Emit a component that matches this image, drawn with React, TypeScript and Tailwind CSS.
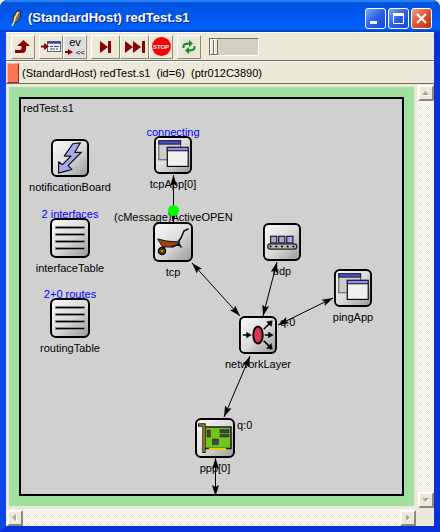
import type { ReactNode } from "react";

const bevel = "border border-t-white border-l-white border-r-[#8c897b] border-b-[#8c897b]";

function ToolButton({ label, wide, children }: { label: string; wide?: boolean; children: ReactNode }) {
  return (
    <button
      type="button"
      aria-label={label}
      className={`flex h-6 items-center justify-center bg-[#ece9d8] ${bevel} ${wide ? "w-[29px]" : "w-6"}`}
    >
      {children}
    </button>
  );
}

function Tile({ size, children }: { size: number; children: ReactNode }) {
  return (
    <svg width={size} height={size} viewBox="0 0 40 40" className="block" aria-hidden="true">
      <rect x="1" y="1" width="38" height="38" rx="5" fill="url(#tile)" stroke="#000" strokeWidth="2" />
      {children}
    </svg>
  );
}

function Lines() {
  return (
    <g>
      {[9, 16, 23, 30].map((y) => (
        <g key={y}>
          <path d={`M5 ${y + 0.5}H35`} stroke="#8a8a8a" strokeWidth="3" />
          <path d={`M6 ${y + 0.5}H34`} stroke="#000" strokeWidth="1" />
        </g>
      ))}
    </g>
  );
}

function Windows() {
  return (
    <g strokeWidth="1.2">
      <rect x="5" y="5" width="23" height="20" fill="#cccccc" stroke="#666" />
      <rect x="5" y="5" width="23" height="3.5" fill="#5050c8" stroke="#224" />
      <rect x="14" y="12" width="22" height="20" fill="#f0f0f0" stroke="#000" />
      <rect x="14" y="12" width="22" height="3.5" fill="#9090e4" stroke="#224" />
    </g>
  );
}

function Bolt() {
  return (
    <path
      d="M23 5L31 4L25 14L32 14L18 28L22 32L8 36L8 24L12 27L21 18L14 18Z"
      fill="#a8a8ec"
      stroke="#111"
      strokeWidth="1.3"
      strokeLinejoin="round"
    />
  );
}

function Barrow() {
  return (
    <g stroke="#111" strokeLinecap="round" strokeLinejoin="round">
      <path d="M25 20L28 16L31 9L35 7" fill="none" strokeWidth="1.6" />
      <path d="M5 17L13 19L27 20L25 23L18 25L10 25Z" fill="#a0400c" strokeWidth="1" />
      <path d="M19 25L26 22L28 25M11 25L9 29" fill="none" strokeWidth="1.6" />
      <circle cx="9" cy="29" r="3.5" fill="#5a4210" strokeWidth="1.6" />
      <circle cx="9" cy="29" r="1" fill="#d8b040" stroke="none" />
    </g>
  );
}

function Conveyor() {
  return (
    <g stroke="#222" strokeWidth="1.3">
      <rect x="8" y="14" width="6.5" height="7" fill="#a8a8e8" />
      <rect x="16.5" y="14" width="6.5" height="7" fill="#a8a8e8" />
      <rect x="25" y="14" width="6.5" height="7" fill="#a8a8e8" />
      <rect x="5" y="22" width="30.5" height="5.5" rx="2.7" fill="#b8b8b8" />
      {[8, 14, 20, 26, 32].map((x) => (
        <circle key={x} cx={x} cy="24.7" r="1.1" fill="#000" stroke="none" />
      ))}
    </g>
  );
}

function Router() {
  return (
    <g stroke="#000" strokeWidth="1.6" fill="#000">
      <path d="M4 20H10M27 20H33M26 14L32 8M26 26L32 32" />
      <path d="M8 17L13 20L8 23ZM31 17L36 20L31 23ZM29 6L35 5L34 11ZM34 29L35 35L29 34Z" strokeWidth="0.5" />
      <ellipse cx="20" cy="20" rx="5" ry="9" fill="#dc3850" strokeWidth="2" />
    </g>
  );
}

function Card() {
  return (
    <g stroke="#222">
      <rect x="9" y="9" width="27" height="21.5" fill="#72c41e" strokeWidth="1.6" />
      <path d="M3 7H9V35" fill="none" strokeWidth="3.4" />
      <path d="M4 7H9V34" fill="none" stroke="#d8a800" strokeWidth="1.2" />
      <path d="M14 31H31" stroke="#e0d000" strokeWidth="2" />
      <g fill="#444" strokeWidth="0.5">
        <rect x="12" y="12" width="3.5" height="7" />
        <rect x="17.5" y="21" width="6" height="5.5" />
        <rect x="25" y="11.5" width="9" height="3.5" />
        <rect x="25" y="16.5" width="9" height="2.5" />
      </g>
    </g>
  );
}

type Module = { name: string; note?: string; x: number; y: number; size: number; icon: ReactNode };

const modules: Module[] = [
  { name: "notificationBoard", x: 61, y: 52, size: 38, icon: <Bolt /> },
  { name: "interfaceTable", note: "2 interfaces", x: 61, y: 131, size: 40, icon: <Lines /> },
  { name: "routingTable", note: "2+0 routes", x: 61, y: 211, size: 40, icon: <Lines /> },
  { name: "tcpApp[0]", note: "connecting", x: 164, y: 49, size: 38, icon: <Windows /> },
  { name: "tcp", x: 164, y: 135, size: 40, icon: <Barrow /> },
  { name: "udp", x: 273, y: 136, size: 38, icon: <Conveyor /> },
  { name: "pingApp", x: 344, y: 182, size: 38, icon: <Windows /> },
  { name: "networkLayer", x: 249, y: 229, size: 38, icon: <Router /> },
  { name: "ppp[0]", x: 206, y: 331, size: 40, icon: <Card /> },
];

const links = [
  "M164.5 88V135",
  "M183 176L231 229",
  "M268 175L254 229",
  "M324 211L269 238",
  "M241 269L215 330",
  "M206.5 371V409",
];

function ModuleNode({ name, note, x, y, size, icon }: Module) {
  return (
    <div className="absolute flex w-0 flex-col items-center whitespace-nowrap" style={{ left: x, top: y }}>
      {note && <span className="absolute bottom-full -mb-[3px] text-[#0000ff]">{note}</span>}
      <div className="relative">
        <Tile size={size}>{icon}</Tile>
      </div>
      <span className="mt-[3px]">{name}</span>
    </div>
  );
}

function ScrollButton({ label, d }: { label: string; d: string }) {
  return (
    <button
      type="button"
      aria-label={label}
      className="flex size-4 shrink-0 items-center justify-center border-2 border-t-white border-r-[#8c897b] border-b-[#8c897b] border-l-white bg-[#ece9d8]"
    >
      <svg width="8" height="8" viewBox="0 0 8 8" aria-hidden="true">
        <path d={d} fill="#fff" transform="translate(1 1)" />
        <path d={d} fill="#aca899" />
      </svg>
    </button>
  );
}

const caption = "flex size-[21px] items-center justify-center rounded-[3px] border border-white";
const track = "bg-[repeating-conic-gradient(#ece9d8_0_25%,#ffffff_0_50%)] bg-size-[2px_2px]";

export default function App() {
  return (
    <div className="h-screen bg-[#ece9d8]">
      <div className="flex h-full flex-col overflow-hidden rounded-t-lg bg-[#0831d9] font-['Liberation_Sans',Arial,sans-serif] text-[11px] leading-[14px] text-black">
        <header className="flex h-8 shrink-0 items-center gap-1.5 bg-linear-to-b from-[#0050d8] via-[#0058ee] to-[#0062ff] pt-1 pr-2 pl-2.5 shadow-[inset_0_2px_1px_#2a86f8,inset_0_-2px_1px_#0046c8]">
          <svg width="12" height="18" viewBox="0 0 12 18" aria-hidden="true">
            <path d="M9 1L11 3L10 9L6 14L3 13L3 8L6 3Z" fill="#7c7450" stroke="#222" strokeWidth="1" />
            <path d="M8 3L5 9L4 13L2 17" fill="none" stroke="#f0e8b0" strokeWidth="1.5" />
          </svg>
          <h1 className="flex-1 truncate text-[13px] leading-5 font-bold text-white [text-shadow:1px_1px_#0a1883]">
            (StandardHost) redTest.s1
          </h1>
          <div className="flex gap-0.5">
            <button type="button" aria-label="Minimize" className={`${caption} bg-linear-to-br from-[#7da2f0] via-[#2c61e8] to-[#1c48c8]`}>
              <svg width="19" height="19" aria-hidden="true"><path d="M4 13.5H11" stroke="#fff" strokeWidth="3" /></svg>
            </button>
            <button type="button" aria-label="Maximize" className={`${caption} bg-linear-to-br from-[#7da2f0] via-[#2c61e8] to-[#1c48c8]`}>
              <svg width="19" height="19" aria-hidden="true"><path d="M4.5 5V14.5H14.5V5" fill="none" stroke="#fff" strokeWidth="1" /><path d="M4 5.5H15" stroke="#fff" strokeWidth="3" /></svg>
            </button>
            <button type="button" aria-label="Close" className={`${caption} bg-linear-to-br from-[#f0a088] via-[#e0502c] to-[#c03008]`}>
              <svg width="19" height="19" aria-hidden="true"><path d="M5 5L14 14M14 5L5 14" stroke="#fff" strokeWidth="2.2" /></svg>
            </button>
          </div>
        </header>
        <div className="flex min-h-0 flex-1 border-x-[6px] border-b-[6px] border-t-0 border-r-[#0831d9] border-b-[#0831d9] border-l-[#0a48e8]">
          <div className="flex min-w-0 flex-1 flex-col bg-[#ece9d8]">
            <div className="flex h-[29px] shrink-0 items-center gap-1 border-t border-b border-t-white border-b-[#716f64] pl-[5px]">
              <ToolButton label="Go to parent">
                <svg width="16" height="16" viewBox="0 0 16 16" aria-hidden="true"><path d="M8.5 1L15 7H11V10Q11 14 7 14H0V11H5Q6.5 11 6.5 9V7H2Z" fill="#8b0000" /></svg>
              </ToolButton>
              <div className="flex">
                <ToolButton label="Inspect as object">
                  <svg width="22" height="20" viewBox="0 0 22 20" aria-hidden="true"><rect x="7.5" y="4.5" width="13" height="10" fill="#f4f4f4" stroke="#666" /><path d="M7 5.5H21" stroke="#3c4c9c" strokeWidth="2.5" /><path d="M10 9.5H13M14 9.5H19M10 12H15M16 12H18" stroke="#224a9c" /><path d="M1 9.5H6" stroke="#8b0000" strokeWidth="2" /><path d="M4 6L9 9.5L4 13Z" fill="#8b0000" /></svg>
                </ToolButton>
                <ToolButton label="Event output">
                  <span className="flex size-5 flex-col bg-[#dcdcdc]">
                    <span className="text-[11px] leading-[11px]">ev</span>
                    <span className="flex items-center justify-between">
                      <svg width="8" height="8" aria-hidden="true"><path d="M0 4H5" stroke="#8b0000" strokeWidth="2" /><path d="M3 1L8 4L3 7Z" fill="#8b0000" /></svg>
                      <span className="text-[8px] leading-[9px]">&lt;&lt;</span>
                    </span>
                  </span>
                </ToolButton>
              </div>
              <div className="flex">
                <ToolButton label="Run until next event" wide>
                  <svg width="14" height="14" viewBox="0 0 14 14" aria-hidden="true"><path d="M1 1L9 7L1 13ZM9 1H12V13H9Z" fill="#8b0000" /></svg>
                </ToolButton>
                <ToolButton label="Fast run" wide>
                  <svg width="20" height="14" viewBox="0 0 20 14" aria-hidden="true"><path d="M0 1L8 7L0 13ZM8 1L16 7L8 13ZM17 1H20V13H17Z" fill="#8b0000" /></svg>
                </ToolButton>
                <ToolButton label="Stop">
                  <span className="flex size-[19px] shrink-0 items-center justify-center rounded-full bg-[#f80000] text-[6px] leading-none font-bold text-white">STOP</span>
                </ToolButton>
              </div>
              <ToolButton label="Redraw">
                <span className="flex size-4 items-center justify-center bg-[#e4e4da]">
                  <svg width="14" height="14" viewBox="0 0 14 14" aria-hidden="true">
                    <path d="M1.5 8V6Q2 3.5 7 3.5M12.5 6V8Q12 10.5 7 10.5" fill="none" stroke="#1c8a1c" strokeWidth="2" />
                    <path d="M7 0L11 3.5L7 7ZM7 7L3 10.5L7 14Z" fill="#1c8a1c" />
                  </svg>
                </span>
              </ToolButton>
              <input
                type="range"
                aria-label="Animation speed"
                min="0"
                max="100"
                defaultValue="0"
                className="ml-1 h-[18px] w-[50px] appearance-none border border-t-[#716f64] border-r-white border-b-white border-l-[#716f64] bg-[#d4d0c8] [&::-webkit-slider-thumb]:h-4 [&::-webkit-slider-thumb]:w-2 [&::-webkit-slider-thumb]:appearance-none [&::-webkit-slider-thumb]:border [&::-webkit-slider-thumb]:border-t-white [&::-webkit-slider-thumb]:border-r-[#716f64] [&::-webkit-slider-thumb]:border-b-[#716f64] [&::-webkit-slider-thumb]:border-l-white [&::-webkit-slider-thumb]:bg-[linear-gradient(to_right,#ece9d8_2px,#716f64_2px,#716f64_3px,#ffffff_3px,#ffffff_4px,#ece9d8_4px)]"
              />
            </div>
            <div className="flex h-[23px] shrink-0 items-center border-t border-b border-t-white border-b-[#716f64] pl-px">
              <span className="h-5 w-3 border border-t-[#ffb0a0] border-r-[#803828] border-b-[#803828] border-l-[#ffb0a0] bg-[#ff7256]" />
              <p className="pl-[3px] whitespace-pre">(StandardHost) redTest.s1  (id=6)  (ptr012C3890)</p>
            </div>
            <div className="grid min-h-0 flex-1 grid-cols-[minmax(0,1fr)_17px] grid-rows-[minmax(0,1fr)_17px] gap-px pt-px">
              <main className="relative mt-0.5 mr-0.5 mb-0.5 ml-[3px] overflow-hidden bg-[#a0e0a0] p-2.5">
                <div className="h-full border-2 border-black bg-[#d0d0d0] pt-0.5 pl-0.5">redTest.s1</div>
                <svg width="0" height="0" className="absolute" aria-hidden="true">
                  <defs>
                    <linearGradient id="tile" x1="0" y1="0" x2="1" y2="1">
                      <stop offset="0" stopColor="#fafafa" />
                      <stop offset="0.5" stopColor="#dcdcdc" />
                      <stop offset="1" stopColor="#989898" />
                    </linearGradient>
                  </defs>
                </svg>
                {modules.map((m) => (
                  <ModuleNode key={m.name} {...m} />
                ))}
                <span className="absolute top-[331px] left-[228px]">q:0</span>
                <span className="absolute top-[228px] left-[271px]">q:0</span>
                <span className="absolute top-[123px] left-[105px]">(cMessage)ActiveOPEN</span>
                <svg className="pointer-events-none absolute inset-0 size-full" aria-hidden="true">
                  <defs>
                    <marker id="head" markerWidth="12" markerHeight="8" refX="11" refY="4" orient="auto-start-reverse" markerUnits="userSpaceOnUse">
                      <path d="M11 4L0 0.5L2 4L0 7.5Z" />
                    </marker>
                  </defs>
                  {links.map((d) => (
                    <path key={d} d={d} stroke="#000" strokeWidth="1" markerStart="url(#head)" markerEnd="url(#head)" />
                  ))}
                  <circle cx="164.5" cy="123.5" r="5.5" fill="#00ff00" />
                </svg>
              </main>
              <div className={`flex flex-col items-center justify-between ${track}`}>
                <ScrollButton label="Scroll up" d="M0 6L3.5 2L7 6Z" />
                <ScrollButton label="Scroll down" d="M0 2L3.5 6L7 2Z" />
              </div>
              <div className={`flex items-center justify-between pl-px ${track}`}>
                <ScrollButton label="Scroll left" d="M5 0L1 3.5L5 7Z" />
                <ScrollButton label="Scroll right" d="M2 0L6 3.5L2 7Z" />
              </div>
            </div>
          </div>
        </div>
      </div>
    </div>
  );
}
